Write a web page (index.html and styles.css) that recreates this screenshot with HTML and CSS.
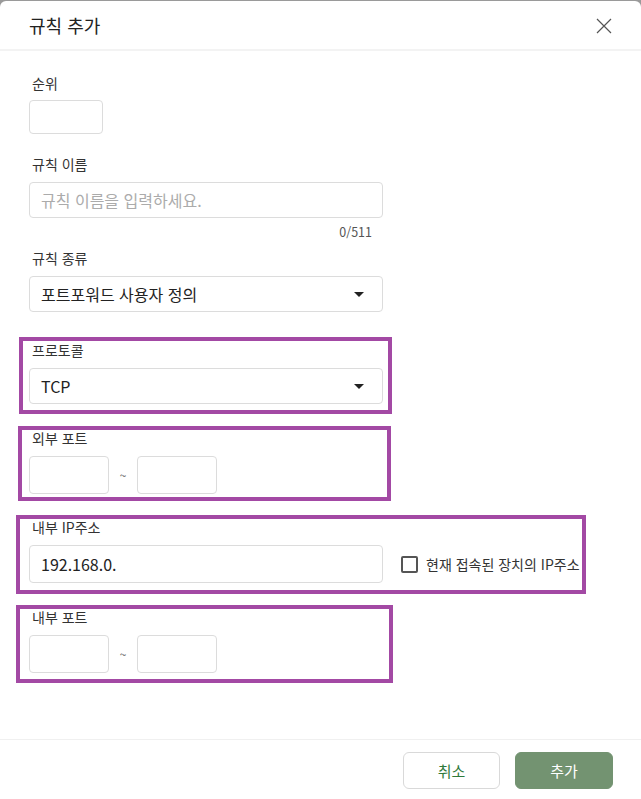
FILE: index.html
```html
<!DOCTYPE html>
<html lang="ko">
<head>
<meta charset="utf-8">
<title>규칙 추가</title>
<link rel="stylesheet" href="styles.css">
</head>
<body>
<div class="dialog">
  <header class="dlg-head">
    <h1 class="dlg-title">규칙 추가</h1>
    <button class="close-btn" type="button" aria-label="닫기">
      <svg width="16" height="16" viewBox="0 0 16 16"><path d="M1 1 L15 15 M15 1 L1 15" stroke="#555" stroke-width="1.2" fill="none"/></svg>
    </button>
  </header>
  <div class="dlg-body">
    <div class="field f-rank">
      <div class="label">순위</div>
      <div class="input small"></div>
    </div>
    <div class="field f-name">
      <div class="label">규칙 이름</div>
      <div class="input wide"><span class="placeholder">규칙 이름을 입력하세요.</span></div>
      <div class="counter">0/511</div>
    </div>
    <div class="field f-type">
      <div class="label">규칙 종류</div>
      <div class="input wide select"><span class="value">포트포워드 사용자 정의</span><span class="caret"></span></div>
    </div>
    <div class="field f-proto">
      <span class="annot a-proto"></span>
      <div class="label">프로토콜</div>
      <div class="input wide select"><span class="value">TCP</span><span class="caret"></span></div>
    </div>
    <div class="field f-ext">
      <span class="annot a-ext"></span>
      <div class="label">외부 포트</div>
      <div class="range">
        <div class="input port"></div>
        <span class="tilde">~</span>
        <div class="input port"></div>
      </div>
    </div>
    <div class="field f-ip">
      <span class="annot a-ip"></span>
      <div class="label">내부 IP주소</div>
      <div class="ip-row">
        <div class="input wide tall"><span class="value">192.168.0.</span></div>
        <label class="check"><span class="box"></span><span class="check-text">현재 접속된 장치의 IP주소</span></label>
      </div>
    </div>
    <div class="field f-int">
      <span class="annot a-int"></span>
      <div class="label">내부 포트</div>
      <div class="range">
        <div class="input port"></div>
        <span class="tilde">~</span>
        <div class="input port"></div>
      </div>
    </div>
  </div>
  <footer class="dlg-foot">
    <button class="btn btn-cancel" type="button">취소</button>
    <button class="btn btn-ok" type="button">추가</button>
  </footer>
</div>
</body>
</html>
```

FILE: styles.css
```css
* { box-sizing: border-box; }
html, body { margin: 0; padding: 0; }
body {
  background: #9a9a9a;
  font-family: "Noto Sans CJK KR", "Noto Sans", sans-serif;
  color: #333;
  width: 641px;
  height: 799px;
  overflow: hidden;
}
.dialog {
  margin-top: 1px;
  width: 641px;
  height: 798px;
  background: #fff;
  border-radius: 6px 6px 0 0;
  display: flex;
  flex-direction: column;
}
.dlg-head {
  height: 50px;
  border-bottom: 2px solid #f3f3f3;
  display: flex;
  align-items: center;
  justify-content: space-between;
  padding: 0 29px 0 29px;
  flex: none;
}
.dlg-title {
  margin: 0;
  font-size: 18px;
  font-weight: 400;
  color: #222;
  line-height: 24px;
}
.close-btn {
  border: 0;
  background: none;
  padding: 0;
  width: 16px;
  height: 16px;
  display: block;
  margin-top: 2px;
}
.close-btn svg { display: block; }
.dlg-body {
  flex: 1;
  padding: 22px 0 0 29px;
}
.field {
  position: relative;
  width: 354px;
}
.f-name { margin-top: 20px; }
.f-type { margin-top: 6px; }
.f-proto { margin-top: 28px; }
.f-ext { margin-top: 24px; }
.f-ip { margin-top: 23px; }
.f-int { margin-top: 24px; }
.label {
  font-size: 14px;
  line-height: 20px;
  height: 20px;
  color: #333;
  margin-bottom: 8px;
  padding-left: 3px;
}
.f-rank .label { margin-bottom: 7px; }
.input {
  border: 1px solid #dcdcdc;
  border-radius: 4px;
  height: 36px;
  background: #fff;
  display: flex;
  align-items: center;
  padding: 0 18px 0 11px;
  font-size: 16px;
  color: #222;
}
.input.small { width: 74px; height: 34px; }
.input.wide { width: 354px; }
.input.tall { height: 38px; }
.input.port { width: 80px; height: 38px; }
.placeholder { color: #ababab; }
.select { justify-content: space-between; }
.caret {
  width: 0;
  height: 0;
  border-left: 5px solid transparent;
  border-right: 5px solid transparent;
  border-top: 5px solid #222;
}
.counter {
  text-align: right;
  font-size: 12.5px;
  line-height: 20px;
  color: #555;
  margin-top: 4px;
  padding-right: 11px;
}
.range {
  display: flex;
  align-items: center;
}
.tilde {
  width: 28px;
  text-align: center;
  font-size: 12px;
  color: #666;
  line-height: 12px;
}
.ip-row {
  display: flex;
  align-items: center;
}
.ip-row .input { flex: none; }
.check {
  display: flex;
  align-items: center;
  margin-left: 18px;
  white-space: nowrap;
  flex: none;
}
.box {
  width: 17px;
  height: 17px;
  border: 2px solid #555;
  border-radius: 2px;
  background: #fff;
  flex: none;
}
.check-text {
  margin-left: 8px;
  font-size: 14px;
  color: #333;
  line-height: 20px;
}
.annot {
  position: absolute;
  border: 4px solid #a349a4;
  pointer-events: none;
}
.a-proto { top: -3px; left: -10px; right: -9px; bottom: -10px; }
.a-ext { top: -2px; left: -11px; right: -8px; bottom: -7px; }
.a-ip { top: -2px; left: -13px; width: 570px; bottom: -11px; }
.a-int { top: -2px; left: -13px; right: -10px; bottom: -10px; }
.dlg-foot {
  flex: none;
  border-top: 1px solid #f0f0f0;
  height: 60px;
  display: flex;
  justify-content: flex-end;
  align-items: flex-start;
  gap: 15px;
  padding: 12px 28px 0 0;
}
.btn {
  font-family: inherit;
  font-size: 15px;
  height: 37px;
  border-radius: 6px;
  padding: 0;
}
.btn-cancel {
  width: 97px;
  background: #fff;
  border: 1px solid #d9d9d9;
  color: #2f7a3a;
}
.btn-ok {
  width: 98px;
  background: #739371;
  border: 1px solid #739371;
  color: #fff;
}
```
